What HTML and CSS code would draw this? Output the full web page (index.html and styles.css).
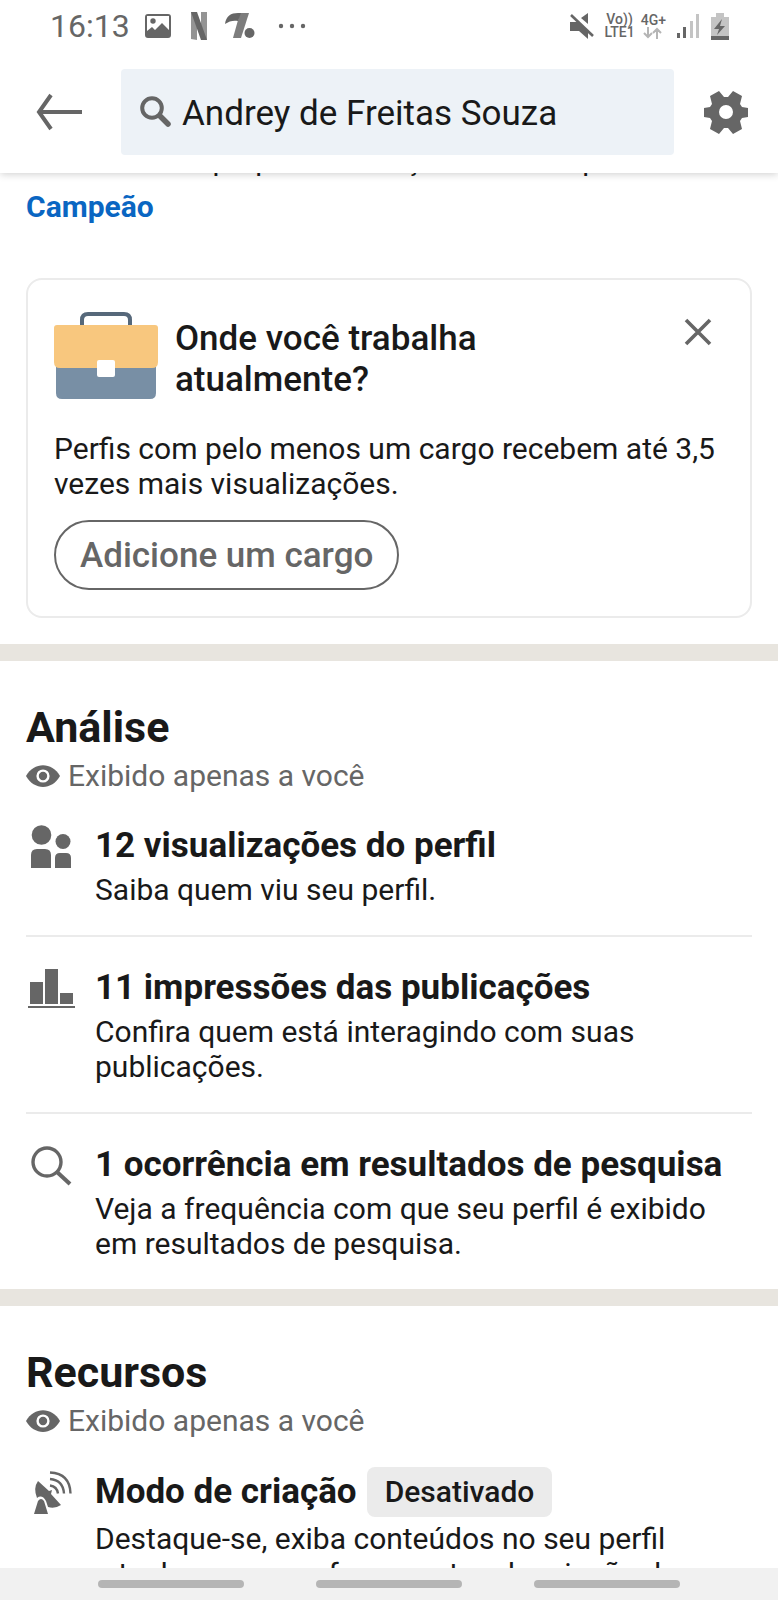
FILE: index.html
```html
<!DOCTYPE html>
<html lang="pt-BR">
<head>
<meta charset="utf-8">
<meta name="viewport" content="width=device-width, initial-scale=1">
<title>Perfil</title>
<link rel="stylesheet" href="styles.css">
</head>
<body>
<div class="screen">
  <header class="header">
    <div class="status">
      <div class="status-left">
        <span class="clock">16:13</span>
        <svg class="s-image" width="26" height="26" viewBox="0 0 26 26"><path fill-rule="evenodd" d="M3 1h20q3 0 3 3v18q0 3-3 3H3q-3 0-3-3V4q0-3 3-3zM2 3v15l5-4 3 3 7-7 7 7V3z"/><circle cx="8" cy="8" r="2.7"/></svg>
        <svg class="s-n" width="16" height="28" viewBox="0 0 16 28"><path opacity=".7" d="M0 0h6v28l-6-1zM10 0h6v28l-6-1z"/><path d="M0 0h6l10 28h-6z"/></svg>
        <svg class="s-pct" width="30" height="28" viewBox="0 0 30 28"><path opacity=".85" d="M15 1h9L16 26H8z"/><path d="M0 12C1 4 6 1 13 1h3l-3 8C9 8 4 9 0 12z"/><circle cx="24.500" cy="21" r="5"/></svg>
        <svg width="28" height="6" viewBox="0 0 28 6"><circle cx="3" cy="3" r="2.2"/><circle cx="14" cy="3" r="2.2"/><circle cx="25" cy="3" r="2.2"/></svg>
      </div>
      <div class="status-right">
        <svg width="24" height="26" viewBox="0 0 24 26"><path d="M18 0v11l-7-6z"/><path d="M0 9h8l10 9v8l-9-8H0z"/><path d="M3 1l21 20" fill="none" stroke="#fff" stroke-width="2"/><path d="M1 2l22 21" fill="none" stroke="#666" stroke-width="2.6"/></svg>
        <div class="net"><span>Vo))</span><span>LTE1</span></div>
        <div class="net net-4g"><span>4G+</span>
          <svg width="20" height="12" viewBox="0 0 20 12"><path d="M5 0v10M1 6l4 4 4-4M14 12V2M10 6l4-4 4 4" fill="none" stroke="#b5b5b5" stroke-width="2"/></svg>
        </div>
        <svg class="s-signal" width="23" height="26" viewBox="0 0 23 26"><path d="M0 20h3v5H0zM6 14h3v11H6z"/><path fill="#c4c4c4" d="M13 8h3v17h-3zM19 1h3v24h-3z"/></svg>
        <svg class="s-bat" width="18" height="27" viewBox="0 0 18 27"><path fill="#c4c4c4" d="M5 0h8v4h5v23H0V4h5z"/><path d="M0 23h18v4H0zM11 6l-8 10h5l-2 6 8-9H9z"/></svg>
      </div>
    </div>
    <div class="search-row">
      <button class="icon-btn back" aria-label="Voltar"><svg width="46" height="36" viewBox="0 0 46 36"><path d="M15 1L3 18l12 17M3 18h43" fill="none" stroke="#666" stroke-width="4"/></svg></button>
      <label class="search">
        <svg width="32" height="32" viewBox="0 0 32 32"><circle cx="12" cy="12" r="9.8" fill="none" stroke="#666" stroke-width="4"/><path d="M20 20l8 8" stroke="#666" stroke-width="5.5" stroke-linecap="round"/></svg>
        <input type="text" aria-label="Pesquisar" value="Andrey de Freitas Souza">
      </label>
      <button class="icon-btn gear" aria-label="Configurações"><svg width="44" height="44" viewBox="0 0 44 44"><path fill-rule="evenodd" d="M15 1l5 6h4l5-6 9 5-2 8 2 3 6 1v9l-6 1-2 3 2 8-9 5-5-6h-4l-5 6-9-5 2-8-2-3-6-1v-9l6-1 2-3-2-8zM22 15a7 7 0 100 14 7 7 0 000-14z"/></svg></button>
    </div>
  </header>

  <main class="content">
    <section class="intro">
      <p class="intro-line">Um time com preparo e atuação nacional para ser</p>
      <a class="intro-link" href="#">Campeão</a>
      <div class="card">
        <div class="card-head">
          <svg class="case" width="104" height="88" viewBox="0 0 104 88"><path d="M28 15V8q0-6 6-6h36q6 0 6 6v7" fill="none" stroke="#56687a" stroke-width="4"/><path fill="#788fa5" d="M2 50h100v31q0 6-6 6H8q-6 0-6-6z"/><path fill="#f8c77e" d="M3 13h98q3 0 3 3v34q0 6-6 6H6q-6 0-6-6V16q0-3 3-3z"/><rect fill="#fff" x="43" y="48" width="18" height="17" rx="2"/></svg>
          <h2>Onde você trabalha atualmente?</h2>
          <button class="icon-btn close" aria-label="Fechar"><svg width="26" height="26" viewBox="0 0 26 26"><path d="M1 1l24 24M25 1L1 25" stroke="#666" stroke-width="3.6"/></svg></button>
        </div>
        <p>Perfis com pelo menos um cargo recebem até 3,5 vezes mais visualizações.</p>
        <button class="pill">Adicione um cargo</button>
      </div>
    </section>

    <section class="block">
      <h1>Análise</h1>
      <p class="private"><svg width="34" height="22" viewBox="0 0 34 22"><path d="M0 11C8-3.500 26-3.500 34 11 26 25.500 8 25.500 0 11z"/><circle cx="17" cy="11" r="5.400" fill="none" stroke="#fff" stroke-width="2.400"/></svg>Exibido apenas a você</p>
      <ul>
        <li>
          <svg width="48" height="48" viewBox="0 0 48 48"><circle cx="14.500" cy="9" r="9.800"/><circle cx="36" cy="15.500" r="7.500"/><path d="M4 42V29q0-6 6-6h8q6 0 6 6v13zM28 42V32q0-5 5-5h6q5 0 5 5v10z"/></svg>
          <div><h3>12 visualizações do perfil</h3><p>Saiba quem viu seu perfil.</p></div>
        </li>
        <li>
          <svg width="48" height="48" viewBox="0 0 48 48"><path d="M3 14h13v22H3zM18 1h13v35H18zM33 25h13v11H33zM1 38h47v2H1z"/></svg>
          <div><h3>11 impressões das publicações</h3><p>Confira quem está interagindo com suas publicações.</p></div>
        </li>
        <li>
          <svg width="48" height="48" viewBox="0 0 48 48"><circle cx="20" cy="17" r="14" fill="none" stroke="#666" stroke-width="3.400"/><path d="M30 27l13 12" stroke="#666" stroke-width="4"/></svg>
          <div><h3>1 ocorrência em resultados de pesquisa</h3><p>Veja a frequência com que seu perfil é exibido em resultados de pesquisa.</p></div>
        </li>
      </ul>
    </section>

    <section class="block">
      <h1>Recursos</h1>
      <p class="private"><svg width="34" height="22" viewBox="0 0 34 22"><path d="M0 11C8-3.500 26-3.500 34 11 26 25.500 8 25.500 0 11z"/><circle cx="17" cy="11" r="5.400" fill="none" stroke="#fff" stroke-width="2.400"/></svg>Exibido apenas a você</p>
      <ul class="tagged">
        <li>
          <svg width="48" height="48" viewBox="0 0 48 48"><path d="M7 43l4-13q3-4 6 0l4 13zM11 10l11 10 3-1-1 4 10 11q-6 4-13 2l-2-6q-4-7-9-3-4-10 1-17z"/><path d="M23 14.500q7 1 8 8M23 8q13 1 14 14.500M23 1.500q20 1 20.500 21" fill="none" stroke="#666" stroke-width="2.400"/></svg>
          <div><div class="title-row"><h3>Modo de criação</h3><span class="tag">Desativado</span></div><p>Destaque-se, exiba conteúdos no seu perfil<br>e tenha acesso a ferramentas de criação de conteúdo.</p></div>
        </li>
      </ul>
    </section>
  </main>

  <nav class="navbar" aria-label="Sistema"><button aria-label="Recentes"></button><button aria-label="Início"></button><button aria-label="Voltar ao anterior"></button></nav>
</div>
</body>
</html>
```

FILE: styles.css
```css
* { box-sizing: border-box; margin: 0; padding: 0; }
body { font-family: Roboto, "Liberation Sans", sans-serif; font-size: 30px; line-height: 35px; color: #191919; background: #fff; }
svg { display: block; flex: none; fill: #666; overflow: visible; }
button { border: 0; background: none; font: inherit; color: inherit; }
ul { list-style: none; }

.screen { height: 100vh; display: flex; flex-direction: column; overflow: hidden; }

.header { flex: none; position: relative; z-index: 1; background: #fff; padding-bottom: 18px; box-shadow: 0 1px 8px rgba(0, 0, 0, .2); }
.status { height: 69px; padding: 12px 49px 0 50px; display: flex; justify-content: space-between; align-items: flex-start; color: #666; }
.status-left, .status-right { display: flex; align-items: center; height: 28px; }
.clock { font-size: 32px; margin-right: 15px; }
.s-image { margin-right: 20px; }
.s-n { margin-right: 18px; }
.s-pct { margin-right: 23px; }
.net { display: flex; flex-direction: column; align-items: center; font-size: 14px; line-height: 13px; font-weight: 500; margin-left: 10px; }
.net-4g { margin-left: 6px; }
.s-signal { margin-left: 11px; }
.s-bat { margin-left: 11px; }

.search-row { display: flex; align-items: center; padding: 0 30px 0 36px; }
.icon-btn { flex: none; cursor: pointer; }
.search { flex: 1; min-width: 0; height: 86px; margin: 0 30px 0 39px; padding: 0 19px; display: flex; align-items: center; gap: 10px; background: #edf2f7; border-radius: 4px; }
.search input { flex: 1; min-width: 0; height: 44px; padding-top: 2px; border: 0; outline: 0; background: none; font: inherit; font-size: 35px; color: #191919; }

.content { flex: 1; min-height: 0; overflow: hidden; }
.intro { padding: 0 26px 26px; margin-top: -31px; }
.intro-line { white-space: nowrap; }
.intro-link { display: block; margin-top: 12px; font-weight: 700; color: #0a66c2; text-decoration: none; }

.card { margin-top: 54px; padding: 32px 26px 26px; border: 2px solid #ebebeb; border-radius: 16px; }
.card-head { display: flex; align-items: flex-start; }
.card-head h2 { flex: 1; max-width: 420px; margin: 6px 17px 0; font-size: 35px; line-height: 41px; font-weight: 500; }
.close { margin: 7px 13px 0 auto; }
.card p { margin-top: 31px; }
.pill { margin-top: 19px; height: 70px; padding: 0 24px; border: 2px solid #666; border-radius: 35px; font-size: 35px; font-weight: 500; color: #666; }

.block { border-top: 17px solid #e8e5df; padding: 42px 26px 28px; }
h1 { font-size: 43px; line-height: 48px; font-weight: 700; }
.private { display: flex; align-items: center; gap: 8px; margin-top: 7px; color: #666; }
.block ul { padding-top: 33px; }
.block .tagged { padding-top: 29px; }
.block li { display: flex; gap: 20px; }
.block li > svg { margin-left: 1px; }
.block li + li { margin-top: 28px; padding-top: 31px; border-top: 2px solid #ebebeb; }
h3 { font-size: 35px; line-height: 40px; font-weight: 700; }
h3 + p { margin-top: 6px; }
.tagged li > svg { margin-top: 4px; }
.title-row { display: flex; align-items: center; gap: 10px; }
.title-row + p { margin-top: 4px; }
.tag { padding: 0 18px; height: 50px; line-height: 50px; border-radius: 8px; background: #ebebeb; font-weight: 500; }

.navbar { flex: none; height: 32px; display: flex; justify-content: center; align-items: center; gap: 72px; background: #f1f1f1; }
.navbar button { width: 146px; height: 8px; border-radius: 4px; background: #b5b5b5; }
```
